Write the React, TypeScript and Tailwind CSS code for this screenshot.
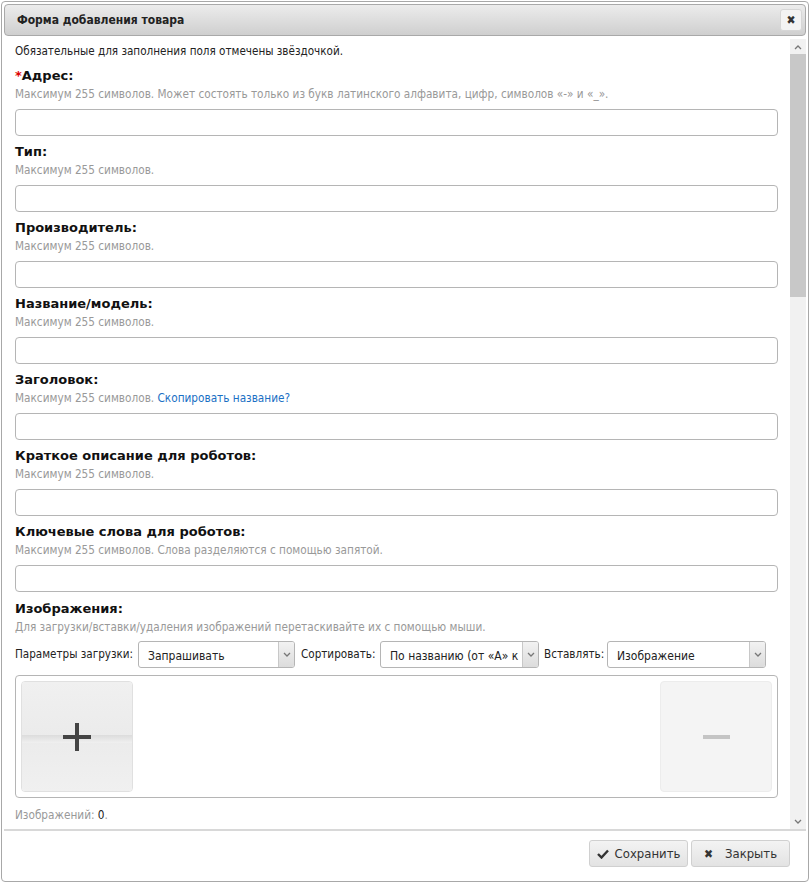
import { useState } from "react";

const FONT = { fontFamily: '"DejaVu Sans Condensed", "Noto Sans", sans-serif' };
const BOLD = { fontFamily: '"DejaVu Sans", "Noto Sans", sans-serif' };

type Field = {
  label: string;
  hint: string;
  required?: boolean;
  link?: string;
};

const fields: Field[] = [
  {
    label: "Адрес:",
    required: true,
    hint: "Максимум 255 символов. Может состоять только из букв латинского алфавита, цифр, символов «-» и «_».",
  },
  { label: "Тип:", hint: "Максимум 255 символов." },
  { label: "Производитель:", hint: "Максимум 255 символов." },
  { label: "Название/модель:", hint: "Максимум 255 символов." },
  { label: "Заголовок:", hint: "Максимум 255 символов.", link: "Скопировать название?" },
  { label: "Краткое описание для роботов:", hint: "Максимум 255 символов." },
  {
    label: "Ключевые слова для роботов:",
    hint: "Максимум 255 символов. Слова разделяются с помощью запятой.",
  },
];

function Chevron({ up }: { up?: boolean }) {
  return (
    <svg width="8" height="6" viewBox="0 0 8 6" className="text-[#777]">
      <path
        d={up ? "M1 5 L4 2 L7 5" : "M1 1 L4 4 L7 1"}
        fill="none"
        stroke="currentColor"
        strokeWidth="1.3"
      />
    </svg>
  );
}

function Select({ value, width }: { value: string; width: string }) {
  return (
    <div
      className={`flex h-[27px] shrink-0 ${width} items-stretch overflow-hidden rounded-[3px] border border-[#b5b5b5] bg-white`}
    >
      <div className="flex-1 overflow-hidden whitespace-nowrap pl-[9px] pt-[5px] text-[12px] text-[#222]">
        {value}
      </div>
      <div className="flex w-[16px] items-center justify-center border-l border-[#c8c8c8] bg-gradient-to-b from-[#f2f2f2] to-[#dcdcdc]">
        <Chevron />
      </div>
    </div>
  );
}

export default function App() {
  const [values, setValues] = useState<string[]>(fields.map(() => ""));

  return (
    <div className="h-[883px] w-[810px] bg-white p-[1px]" style={FONT}>
      <div className="flex h-[881px] flex-col rounded-[4px] border border-[#a8a8a8] bg-white p-[2px]">
        {/* title bar */}
        <div className="flex h-[32px] items-center justify-between rounded-[4px] border border-[#a9a9a9] bg-gradient-to-b from-[#ececec] to-[#cfcfcf] pl-[12px] pr-[3px]">
          <span className="text-[12px] font-bold text-[#222]">Форма добавления товара</span>
          <button className="flex h-[22px] w-[22px] items-center justify-center rounded-[3px] border border-[#d6d6d6] bg-[#f3f3f3] text-[12px] leading-none text-[#333]">
            ✖
          </button>
        </div>

        {/* body */}
        <div className="flex h-[793px] pt-[3px]">
          <div className="flex-1 pl-[11px] pr-[12px]">
            <p className="pt-[3px] text-[11.6px] leading-[18px] text-[#222]">
              Обязательные для заполнения поля отмечены звёздочкой.
            </p>

            {fields.map((f, i) => (
              <div key={f.label} className="mt-[7px]">
                <div className="text-[13px] font-bold leading-[18px] text-[#111]" style={BOLD}>
                  {f.required && <span className="text-[#d00]">*</span>}
                  {f.label}
                </div>
                <div className="text-[11.7px] leading-[18px] text-[#999]">
                  {f.hint}
                  {f.link && (
                    <>
                      {" "}
                      <a className="text-[#1a6fc4]" href="#">
                        {f.link}
                      </a>
                    </>
                  )}
                </div>
                <input
                  value={values[i]}
                  onChange={(e) => {
                    const next = [...values];
                    next[i] = e.target.value;
                    setValues(next);
                  }}
                  className="mt-[6px] block h-[27px] w-[763px] rounded-[4px] border border-[#b5b5b5] bg-white px-2 text-[12px] outline-none"
                />
              </div>
            ))}

            <div className="mt-[8px]">
              <div className="text-[13px] font-bold leading-[18px] text-[#111]" style={BOLD}>
                Изображения:
              </div>
              <div className="text-[11.7px] leading-[18px] text-[#999]">
                Для загрузки/вставки/удаления изображений перетаскивайте их с помощью мыши.
              </div>
              <div className="mt-[5px] flex items-center whitespace-nowrap text-[11.6px] text-[#222]">
                <span className="w-[123px]">Параметры загрузки:</span>
                <Select value="Запрашивать" width="w-[157px]" />
                <span className="w-[85px] pl-[6px]">Сортировать:</span>
                <Select value="По названию (от «А» к «Я»)" width="w-[159px]" />
                <span className="w-[68px] pl-[5px]">Вставлять:</span>
                <Select value="Изображение" width="w-[159px]" />
              </div>

              <div className="mt-[7px] flex h-[123px] w-[763px] justify-between rounded-[4px] border border-[#b5b5b5] bg-white p-[5px]">
                <div className="flex h-[111px] w-[112px] flex-col overflow-hidden rounded-[4px] border border-[#e0e0e0]">
                  <div className="relative flex flex-1 items-center justify-center bg-gradient-to-b from-[#f0f0f0] via-[#ebebeb] to-[#f0f0f0]">
                    <div className="absolute left-0 right-0 top-[53px] h-[8px] bg-gradient-to-b from-[#dcdcdc] to-[#f0f0f0]" />
                    <svg width="32" height="32" viewBox="0 0 32 32" className="relative">
                      <path d="M16 2 V30 M2 16 H30" stroke="#444" strokeWidth="4" />
                    </svg>
                  </div>
                </div>
                <div className="flex h-[111px] w-[112px] items-center justify-center rounded-[4px] border border-[#ececec] bg-[#f4f4f4]">
                  <div className="h-[4px] w-[27px] bg-[#c4c4c4]" />
                </div>
              </div>

              <div className="mt-[8px] text-[11.7px] leading-[18px] text-[#999]">
                Изображений: <span className="text-[#222]">0</span>.
              </div>
            </div>
          </div>

          {/* scrollbar */}
          <div className="flex w-[16px] flex-col bg-[#f1f1f1]">
            <div className="flex h-[15px] items-center justify-center">
              <Chevron up />
            </div>
            <div className="h-[243px] bg-[#c8c8c8]" />
            <div className="flex-1" />
            <div className="flex h-[15px] items-center justify-center">
              <Chevron />
            </div>
          </div>
        </div>

        {/* footer */}
        <div className="flex flex-1 items-start justify-end gap-[3px] border-t-2 border-[#d8d8d8] pr-[16px] pt-[9px]">
          <button className="flex h-[27px] w-[99px] items-center justify-center gap-[6px] rounded-[3px] border border-[#d0d0d0] bg-gradient-to-b from-[#f3f3f3] to-[#e3e3e3] text-[13px] text-[#333]">
            <svg width="12" height="10" viewBox="0 0 12 10">
              <path d="M1 5 L4.5 8.5 L11 1.5" fill="none" stroke="#333" strokeWidth="2.4" />
            </svg>
            Сохранить
          </button>
          <button className="flex h-[27px] w-[99px] items-center justify-center gap-[12px] rounded-[3px] border border-[#d0d0d0] bg-gradient-to-b from-[#f3f3f3] to-[#e3e3e3] text-[13px] text-[#333]">
            <span className="text-[12px] leading-none">✖</span>
            Закрыть
          </button>
        </div>
      </div>
    </div>
  );
}
